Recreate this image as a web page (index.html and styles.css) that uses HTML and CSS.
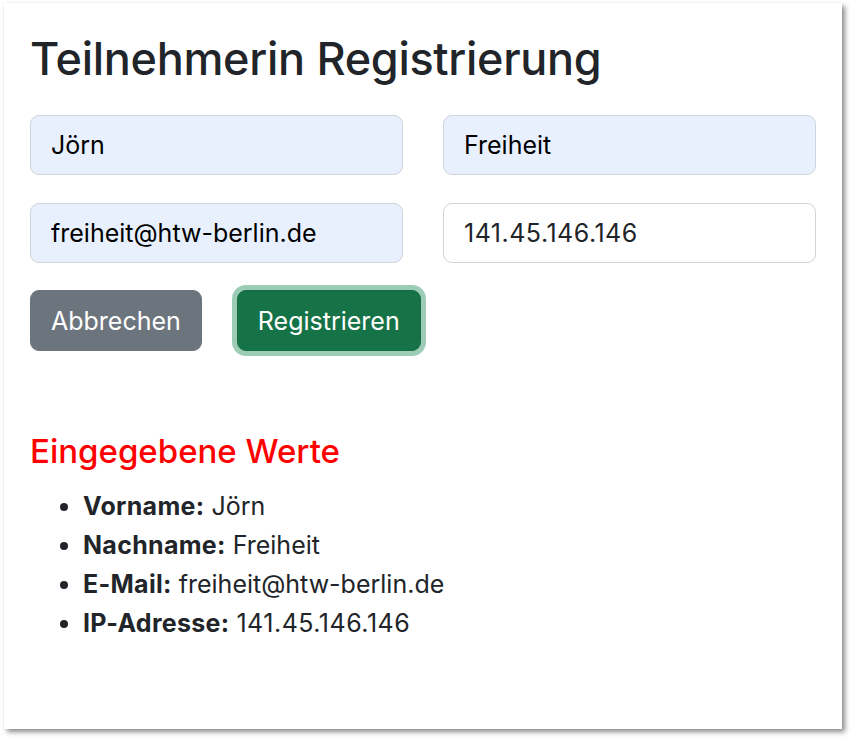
FILE: index.html
```html
<!DOCTYPE html>
<html lang="de">
<head>
<meta charset="utf-8">
<title>Teilnehmerin Registrierung</title>
<link rel="stylesheet" href="styles.css">
</head>
<body>
<div class="frame">
  <div class="card">
    <h1 class="title">Teilnehmerin Registrierung</h1>
    <form class="form">
      <div class="row">
        <input class="field autofill" type="text" value="Jörn">
        <input class="field autofill" type="text" value="Freiheit">
      </div>
      <div class="row">
        <input class="field autofill" type="email" value="freiheit@htw-berlin.de">
        <input class="field ip" type="text" value="141.45.146.146">
      </div>
      <div class="actions">
        <button type="button" class="btn btn-secondary">Abbrechen</button>
        <button type="button" class="btn btn-success">Registrieren</button>
      </div>
    </form>
    <h2 class="subtitle">Eingegebene Werte</h2>
    <ul class="values">
      <li><strong>Vorname:</strong> Jörn</li>
      <li><strong>Nachname:</strong> Freiheit</li>
      <li><strong>E-Mail:</strong> freiheit@htw-berlin.de</li>
      <li><strong>IP-Adresse:</strong> <span class="ip">141.45.146.146</span></li>
    </ul>
  </div>
</div>
</body>
</html>
```

FILE: styles.css
```css
html, body {
  margin: 0;
  padding: 0;
  background: #ffffff;
}
body {
  font-family: Inter, "Noto Sans", "Liberation Sans", sans-serif;
  color: #212529;
}
.frame {
  width: 856px;
  height: 742px;
  box-sizing: border-box;
  padding: 3px 14px 13px 4px;
}
.card {
  height: 100%;
  box-sizing: border-box;
  background: #ffffff;
  padding: 29px 26px 0 26px;
  box-shadow: 3px 3px 5px rgba(0, 0, 0, 0.45), 0 0 1px rgba(0, 0, 0, 0.12);
}
.title {
  margin: 0 0 28px 0;
  font-size: 45px;
  font-weight: 500;
  line-height: 1.2;
  letter-spacing: -0.3px;
  height: 55px;
}
.form {
  display: flex;
  flex-direction: column;
}
.row {
  display: grid;
  grid-template-columns: minmax(0, 1fr) minmax(0, 1fr);
  column-gap: 40px;
  margin-bottom: 28px;
}
.field {
  width: 100%;
  min-width: 0;
  height: 60px;
  box-sizing: border-box;
  border: 1.5px solid #ced4da;
  border-radius: 9px;
  padding: 0 20px;
  font-family: inherit;
  font-size: 25px;
  color: #212529;
  background: #ffffff;
  outline: none;
}
.field.autofill {
  background: #e8f0fe;
  color: #000000;
}
.ip {
  letter-spacing: 0.5px;
}
.actions {
  display: flex;
  gap: 35px;
  margin-top: -1px;
}
.btn {
  height: 61px;
  box-sizing: border-box;
  border-radius: 9px;
  padding: 0 20px;
  font-family: inherit;
  font-size: 25px;
  color: #ffffff;
  border: 1.5px solid transparent;
}
.btn-secondary {
  background: #6c757d;
  border-color: #6c757d;
}
.btn-success {
  background: #157347;
  border-color: #146c43;
  box-shadow: 0 0 0 5px rgba(60, 153, 110, 0.5);
}
.subtitle {
  margin: 81px 0 15px 0;
  font-size: 33px;
  font-weight: 500;
  line-height: 1.2;
  color: #ff0000;
}
.values {
  margin: 0;
  padding-left: 53px;
  font-size: 25px;
  line-height: 39px;
}
.values strong {
  font-weight: 700;
  letter-spacing: 0.3px;
}
```
